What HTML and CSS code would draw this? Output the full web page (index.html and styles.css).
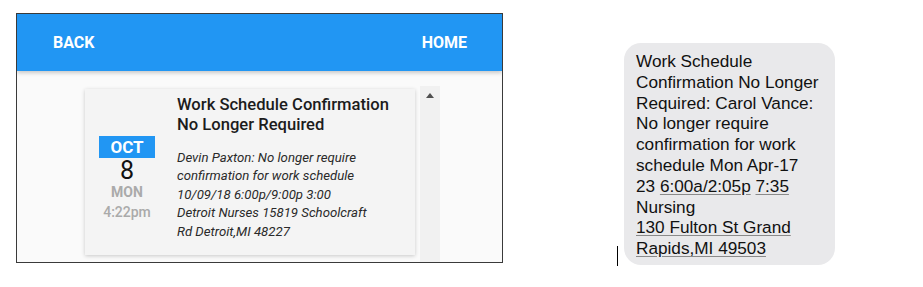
FILE: index.html
```html
<!DOCTYPE html>
<html lang="en">

<head>
    <meta charset="UTF-8">
    <title>Notifications</title>
    <link rel="stylesheet" href="styles.css">
</head>

<body>
    <div class="page">
        <!-- app screen -->
        <div class="app">
            <div class="topbar">
                <a href="#" class="nav">BACK</a>
                <a href="#" class="nav">HOME</a>
            </div>
            <div class="content">
                <div class="list">
                    <div class="card">
                        <div class="date">
                            <div class="month">OCT</div>
                            <div class="day">8</div>
                            <div class="wday">MON</div>
                            <div class="time">4:22pm</div>
                        </div>
                        <div class="msg">
                            <h2 class="title">Work Schedule Confirmation<br>No Longer Required</h2>
                            <p class="body">Devin Paxton: No longer require<br>confirmation for work schedule<br>10/09/18 6:00p/9:00p 3:00<br>Detroit Nurses 15819 Schoolcraft<br>Rd Detroit,MI 48227</p>
                        </div>
                    </div>
                </div>
                <div class="scroll">
                    <span class="arrow"></span>
                </div>
            </div>
        </div>

        <span class="caret"></span>

        <!-- sms bubble -->
        <div class="bubble">
            Work Schedule<br>
            Confirmation No Longer<br>
            Required: Carol Vance:<br>
            No longer require<br>
            confirmation for work<br>
            schedule Mon Apr-17<br>
            23 <u>6:00a/2:05p</u> <u>7:35</u><br>
            Nursing<br>
            <u>130 Fulton St Grand</u><br>
            <u>Rapids,MI 49503</u>
        </div>
    </div>
</body>

</html>
```

FILE: styles.css
```css
* {
    margin: 0;
    padding: 0;
    box-sizing: border-box;
}

body {
    background: #fff;
    font-family: Roboto, "Liberation Sans", sans-serif;
}

.page {
    display: flex;
    align-items: flex-start;
    padding: 13px 0 0 16px;
}

/* 左边的app截图 */
.app {
    width: 487px;
    height: 250px;
    border: 1px solid #3a3a3a;
    display: flex;
    flex-direction: column;
    background: #fafafa;
    overflow: hidden;
}

.topbar {
    height: 57px;
    flex: none;
    background: #2196f3;
    display: flex;
    justify-content: space-between;
    align-items: center;
    padding: 0 35px 0 36px;
    box-shadow: 0 2px 4px rgba(0, 0, 0, 0.2);
    position: relative;
}

.nav {
    color: #fff;
    text-decoration: none;
    font-weight: 700;
    font-size: 16px;
}

.content {
    flex: 1;
    display: flex;
}

.list {
    flex: 1;
    padding: 18px 0 0 68px;
}

.card {
    width: 330px;
    height: 166px;
    background: #f4f4f4;
    box-shadow: 0 1px 4px rgba(0, 0, 0, 0.2);
    display: flex;
    align-items: flex-start;
    padding: 0 6px 0 14px;
    gap: 22px;
}

.date {
    width: 56px;
    flex: none;
    text-align: center;
    padding-top: 47px;
}

.month {
    background: #2196f3;
    color: #fff;
    font-weight: 700;
    font-size: 17px;
    line-height: 22px;
}

.day {
    font-size: 25px;
    line-height: 26px;
    color: #111;
}

.wday {
    color: #aaa;
    font-weight: 700;
    font-size: 14px;
    line-height: 17px;
}

.time {
    color: #aaa;
    font-weight: 500;
    font-size: 14px;
    line-height: 22px;
}

.msg {
    padding-top: 6px;
}

.title {
    font-size: 16.6px;
    font-weight: 500;
    line-height: 20px;
    color: #1c1c1c;
    margin-bottom: 14px;
}

.body {
    font-style: italic;
    font-size: 13.2px;
    line-height: 18.4px;
    color: #2a2a2a;
    white-space: nowrap;
}

/* 滚动条 */
.scroll {
    width: 20px;
    margin: 15px 62px 0 5px;
    background: #f1f1f1;
    display: flex;
    justify-content: center;
    padding-top: 7px;
}

.arrow {
    width: 0;
    height: 0;
    border-left: 4px solid transparent;
    border-right: 4px solid transparent;
    border-bottom: 5px solid #505050;
}

/* 光标 */
.caret {
    width: 1px;
    height: 20px;
    background: #000;
    margin: 233px 0 0 114px;
}

/* 短信气泡 */
.bubble {
    width: 211px;
    height: 222px;
    margin: 30px 0 0 6px;
    background: #e9e9eb;
    border-radius: 17px;
    padding: 8px 6px 0 12px;
    font-family: "Liberation Sans", Arial, sans-serif;
    font-size: 17.2px;
    line-height: 20.8px;
    color: #111;
    white-space: nowrap;
}

.bubble u {
    text-decoration-color: #8a8a8a;
    text-underline-offset: 2px;
}
```
